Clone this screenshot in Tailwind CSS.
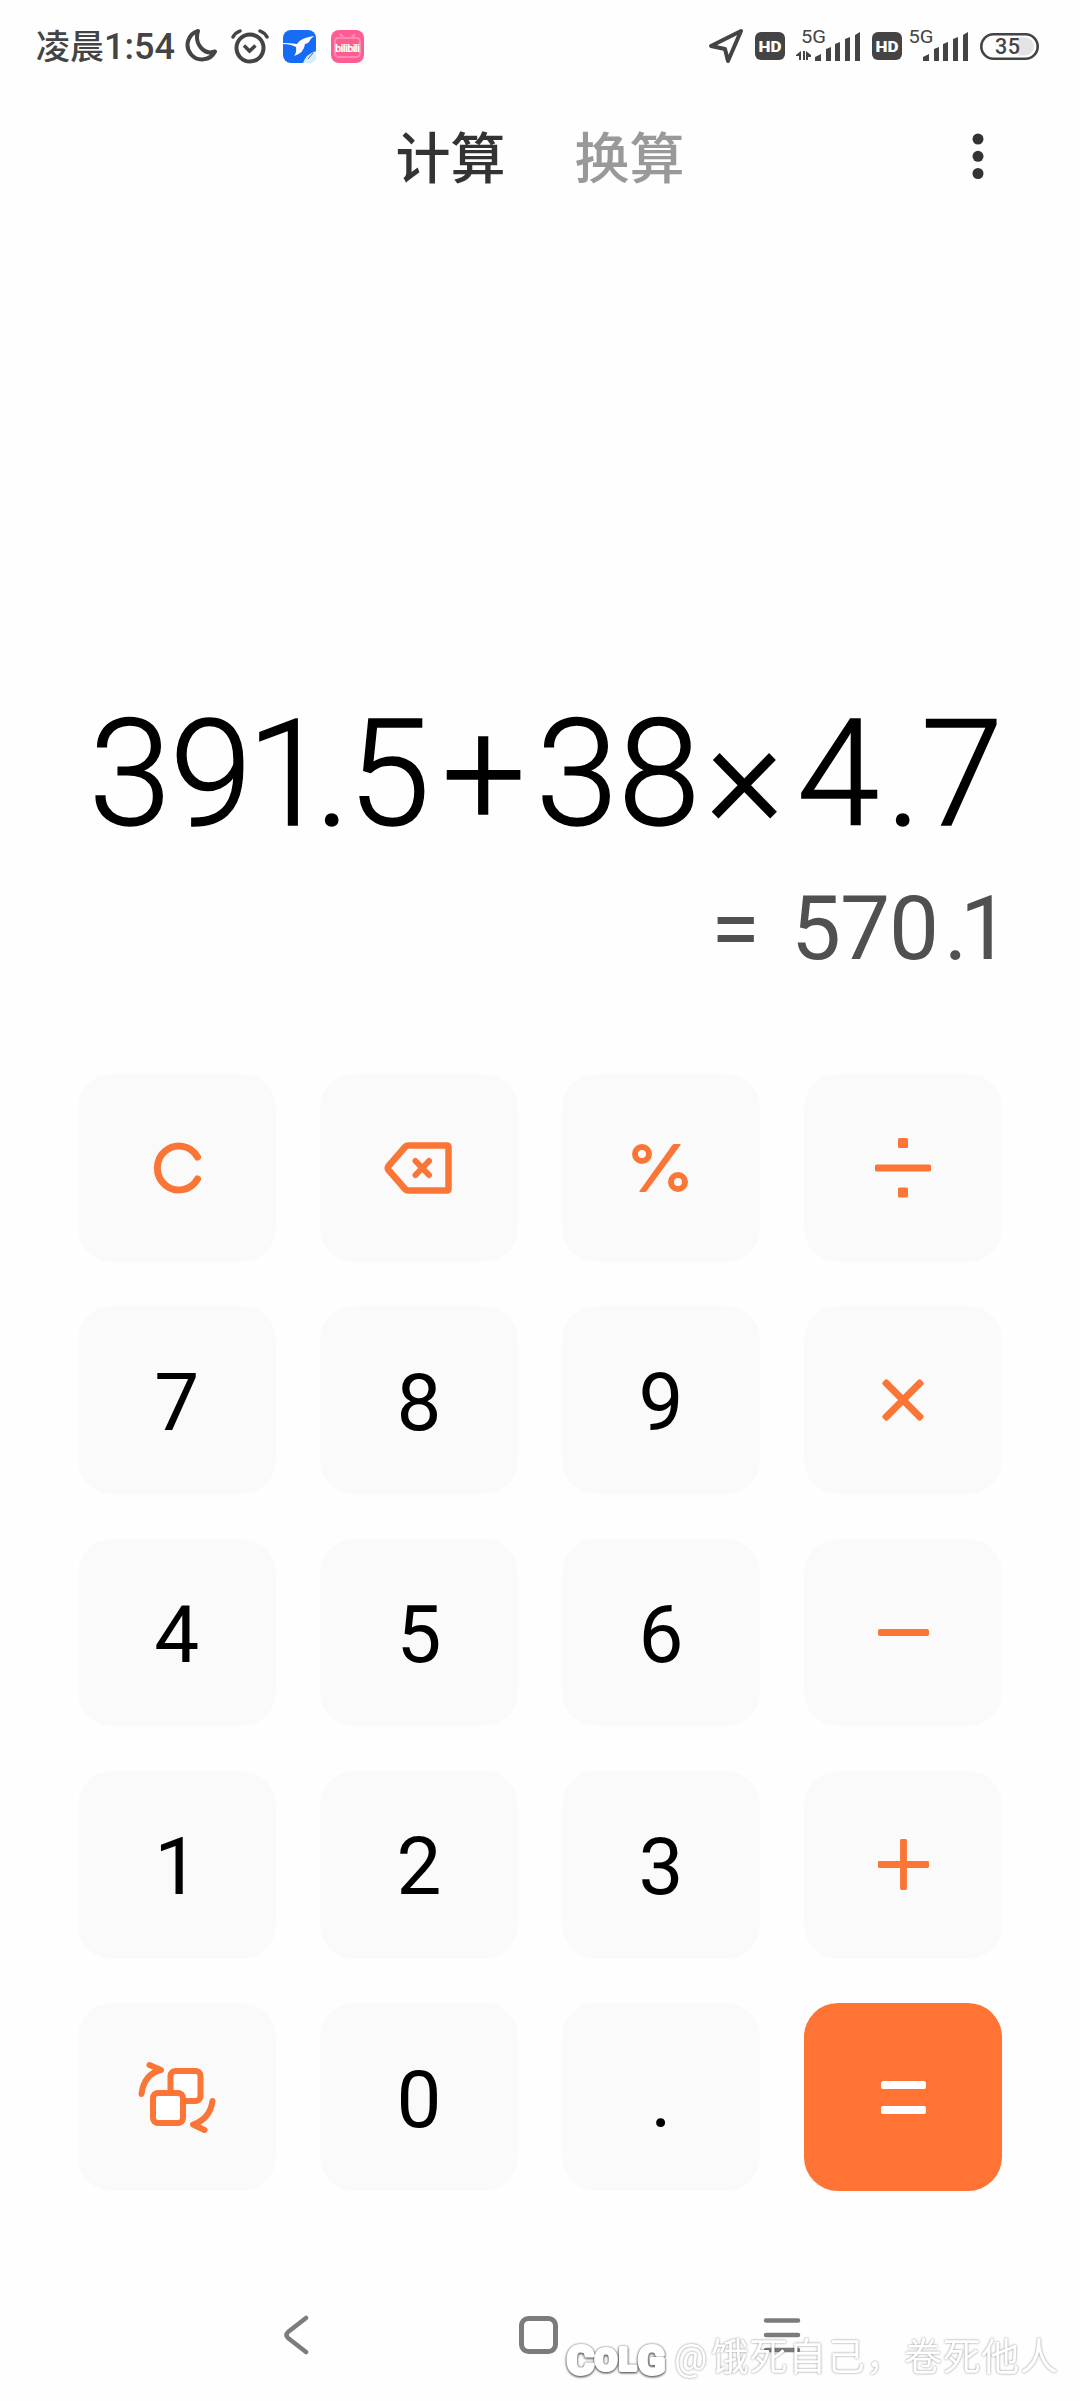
<!DOCTYPE html>
<html lang="zh-CN">
<head>
  <meta charset="UTF-8" />
  <meta name="viewport" content="width=device-width, initial-scale=1.0" />
  <title>计算器</title>
  <script src="https://cdn.jsdelivr.net/npm/@tailwindcss/browser@4"></script>
</head>
<body class="bg-[#fefefe] text-black font-['Roboto','Noto_Sans_CJK_SC',sans-serif]">
  <div class="relative w-[1080px] h-[2401px] flex flex-col overflow-hidden">

    <!-- STATUS BAR -->
    <div class="h-[92px] pl-[36px] pr-[41px] flex items-center justify-between text-[#444]">
      <div class="flex items-center">
        <span class="text-[34px] leading-[40px] font-medium font-['Noto_Sans_CJK_SC',sans-serif] whitespace-nowrap w-[148px]">凌晨<span class="font-['Roboto',sans-serif] text-[36px]">1:54</span></span>
        <svg class="w-[34px] h-[36px]" viewBox="0 0 34 36" fill="none" stroke="currentColor" stroke-width="4" stroke-linejoin="round"><path d="M14 3A14.5 14.5 0 1 0 31 23.500C20 27.500 10 16 14 3Z" /></svg>
        <svg class="w-[38px] h-[36px] ml-[13px]" viewBox="0 0 38 36" fill="none" stroke="currentColor" stroke-width="4"><circle cx="19" cy="20" r="13.500" /><path d="M13 17.500l5.500 5.500 6-5.500" stroke-width="3.500" /><path d="M2 9q2-4 7-6M36 9q-2-4-7-6" stroke-linecap="round" stroke-width="3.500" /></svg>
        <svg class="w-[33px] h-[33px] ml-[14px]" viewBox="0 0 33 33"><rect width="33" height="33" rx="8" fill="#166cf5" /><path d="M20 33Q23 24 33 21V26Q33 33 26 33Z" fill="#d8eefa" /><path d="M0 13Q8 13 14 14Q17 8 31 6Q27 9 26 12Q24 14 22 14Q21 23 11 26Q14 22 13 17Q8 14 0 14Z" fill="#fff" /><path d="M25 29l5-6" stroke="#668" stroke-width="1" /></svg>
        <svg class="w-[33px] h-[33px] ml-[15px]" viewBox="0 0 33 33"><rect width="33" height="33" rx="8" fill="#ff5c92" /><path d="M9 4l4 4M24 4l-4 4M7 8h19q3 0 3 4v11q0 4-4 4H8q-4 0-4-4V12q0-4 3-4Z" fill="none" stroke="#ff8ab2" stroke-width="2" /><text x="4" y="21.500" font-size="11" font-weight="700" textLength="25" lengthAdjust="spacing" fill="#fff">bilibili</text></svg>
      </div>
      <div class="flex items-center">
        <svg class="w-[36px] h-[36px]" viewBox="0 0 36 36" fill="none" stroke="currentColor" stroke-width="4" stroke-linejoin="round"><path d="M3 18L33 3L20 33L17 21Z" /></svg>
        <svg class="w-[30px] h-[28px] ml-[11px]" viewBox="0 0 30 28"><rect width="30" height="28" rx="6" fill="currentColor" /><text x="3.500" y="19.500" font-size="15.500" font-weight="900" textLength="23" lengthAdjust="spacingAndGlyphs" fill="#fff">HD</text></svg>
        <svg class="w-[65px] h-[40px] ml-[11px] mt-[-6px]" viewBox="0 -6 65 40" fill="currentColor"><text x="5" y="13.500" font-size="19" textLength="25" lengthAdjust="spacingAndGlyphs">5G</text><path d="M0 26l5-4v9H3v-4H0ZM7 22h2v9H7ZM10 22l5 4v2h-3v3h-2Z" /><path d="M19 32v-4l6-3v7ZM30 32V20l5-2v14ZM39 32V15l5-2v19ZM49 32V10l5-2v24ZM59 32V6l5-3v29Z" /></svg>
        <svg class="w-[30px] h-[28px] ml-[11px]" viewBox="0 0 30 28"><rect width="30" height="28" rx="6" fill="currentColor" /><text x="3.500" y="19.500" font-size="15.500" font-weight="900" textLength="23" lengthAdjust="spacingAndGlyphs" fill="#fff">HD</text></svg>
        <svg class="w-[61px] h-[40px] ml-[6px] mt-[-6px]" viewBox="0 -6 61 40" fill="currentColor"><text x="0.500" y="13.500" font-size="19" textLength="25" lengthAdjust="spacingAndGlyphs">5G</text><path d="M15 32v-4l6-3v7ZM26 32V20l5-2v14ZM35 32V15l5-2v19ZM45 32V10l5-2v24ZM55 32V6l5-3v29Z" /></svg>
        <svg class="w-[59px] h-[27px] ml-[11px]" viewBox="0 0 59 27"><path d="M38 4.500h7a9 9 0 0 1 0 18h-7Z" fill="#e4e4e4" /><rect x="1.300" y="1.300" width="56.400" height="24.400" rx="12.200" fill="none" stroke="currentColor" stroke-width="2.600" /><text x="15" y="21" font-size="21.500" font-weight="500" textLength="25" fill="currentColor">35</text></svg>
      </div>
    </div>

    <!-- TABS -->
    <div class="relative h-[132px] flex justify-center gap-[69px] text-[55px] leading-[125px] font-medium font-['Noto_Sans_CJK_SC',sans-serif]">
      <span class="text-[#333]">计算</span>
      <span class="text-[#999]">换算</span>
      <svg class="absolute left-[972px] top-[40px] w-[12px] h-[48px]" viewBox="0 0 12 48" fill="#333"><circle cx="6" cy="7" r="5.500" /><circle cx="6" cy="24.300" r="5.500" /><circle cx="6" cy="41.500" r="5.500" /></svg>
    </div>

    <!-- DISPLAY -->
    <div class="h-[850px] pt-[446px]">
      <svg class="block w-[1080px] h-[200px]" viewBox="0 0 1080 200"><text y="155" font-size="148" font-weight="300" stroke="#000" stroke-width="1.500" x="89 170 247 315 348 442 536 618 706 797 886 921">391.5+38×4.7</text></svg>
      <svg class="block w-[1080px] h-[120px]" viewBox="0 0 1080 120" fill="#505050"><text y="89" font-size="89" x="711 758 791 840 889 944 960">= 570.1</text></svg>
    </div>

    <!-- KEYPAD -->
    <div class="mx-[78px] h-[1117px] grid grid-cols-4 grid-rows-5 gap-[44.500px] text-[80px] leading-none">
      <button class="rounded-[34px] bg-[#fafafa] flex items-center justify-center"><svg class="w-[48px] h-[52px]" viewBox="0 0 48 52" fill="none" stroke="#fb7636" stroke-width="7" stroke-linecap="round"><path d="M44.500 15A21.500 22 0 1 0 44.500 37" /></svg></button>
      <button class="rounded-[34px] bg-[#fafafa] flex items-center justify-center"><svg class="w-[68px] h-[52px] mr-[2px]" viewBox="0 0 68 52" fill="none" stroke="#fb7636" stroke-width="6.500" stroke-linecap="round" stroke-linejoin="round"><path d="M24 3.500H63q1.500 0 1.500 1.500V47q0 1.500-1.500 1.500H24q-1.500 0-2.500-1L4.500 28q-1.500-2 0-4L21.500 4.500q1-1 2.500-1Z" /><path d="M31.500 19l13.500 14M45 19l-13.500 14" stroke-width="6" /></svg></button>
      <button class="rounded-[34px] bg-[#fafafa] flex items-center justify-center"><svg class="w-[56px] h-[48px] mr-[2px]" viewBox="0 0 56 48" fill="none" stroke="#fb7636" stroke-width="6"><circle cx="10" cy="10" r="7" /><circle cx="46" cy="38" r="7" /><path d="M42 0h6q1 0 .5 1L15 46.500q-1 1.500-2 1.500H8q-1 0-.5-1L40 1.500q1-1.500 2-1.500Z" fill="#fb7636" stroke="none" /></svg></button>
      <button class="rounded-[34px] bg-[#fafafa] flex items-center justify-center"><svg class="w-[58px] h-[60px]" viewBox="0 0 58 60" fill="#fb7636"><rect x="24" width="10" height="10" rx="1.500" /><rect x="1" y="26.500" width="56" height="7" rx="1.500" /><rect x="24" y="49.500" width="10" height="10" rx="1.500" /></svg></button>

      <button class="rounded-[34px] bg-[#fafafa] pt-[5px]">7</button>
      <button class="rounded-[34px] bg-[#fafafa] pt-[5px]">8</button>
      <button class="rounded-[34px] bg-[#fafafa] pt-[5px]">9</button>
      <button class="rounded-[34px] bg-[#fafafa] flex items-center justify-center"><svg class="w-[44px] h-[44px]" viewBox="0 0 44 44" fill="#fb7636"><rect x="-5" y="18.500" width="54" height="7" rx="2" transform="rotate(45 22 22)" /><rect x="-5" y="18.500" width="54" height="7" rx="2" transform="rotate(-45 22 22)" /></svg></button>

      <button class="rounded-[34px] bg-[#fafafa] pt-[5px]">4</button>
      <button class="rounded-[34px] bg-[#fafafa] pt-[5px]">5</button>
      <button class="rounded-[34px] bg-[#fafafa] pt-[5px]">6</button>
      <button class="rounded-[34px] bg-[#fafafa] flex items-center justify-center"><span class="w-[51px] h-[7px] rounded-[2px] bg-[#fb7636]"></span></button>

      <button class="rounded-[34px] bg-[#fafafa] pt-[5px]">1</button>
      <button class="rounded-[34px] bg-[#fafafa] pt-[5px]">2</button>
      <button class="rounded-[34px] bg-[#fafafa] pt-[5px]">3</button>
      <button class="rounded-[34px] bg-[#fafafa] flex items-center justify-center"><svg class="w-[51px] h-[51px]" viewBox="0 0 52 52" fill="#fb7636"><rect y="22.500" width="52" height="7" rx="1.500" /><rect x="22.500" width="7" height="52" rx="1.500" /></svg></button>

      <button class="rounded-[34px] bg-[#fafafa] flex items-center justify-center"><svg class="w-[78px] h-[72px]" viewBox="0 0 78 72" fill="none" stroke="#fb7636" stroke-width="6" stroke-linecap="round" stroke-linejoin="round"><rect x="32.500" y="10" width="30" height="30" rx="5" fill="#fff" /><rect x="15" y="32" width="30" height="30" rx="5" fill="#fff" /><path d="M3.500 33Q6 13 23 9L11.500 4M74.500 40Q72 58 55 63.500L66.500 69" /></svg></button>
      <button class="rounded-[34px] bg-[#fafafa] pt-[5px]">0</button>
      <button class="rounded-[34px] bg-[#fafafa] pt-[5px]">.</button>
      <button class="rounded-[34px] bg-[#ff7434] flex flex-col items-center justify-center gap-[17px]"><span class="w-[45px] h-[8px] rounded-[2px] bg-white"></span><span class="w-[45px] h-[8px] rounded-[2px] bg-white"></span></button>
    </div>

    <!-- NAVIGATION BAR -->
    <div class="flex-1 pt-[124px] pl-[283px] flex items-start text-[#7c7c7c]">
      <svg class="w-[26px] h-[40px]" viewBox="0 0 26 40" fill="none" stroke="currentColor" stroke-width="4.500" stroke-linecap="round" stroke-linejoin="round"><path d="M23 3L5 17q-3 3 0 6L23 37" /></svg>
      <svg class="w-[40px] h-[40px] ml-[209px]" viewBox="0 0 40 40" fill="none" stroke="currentColor" stroke-width="5"><rect x="3.500" y="3.500" width="34" height="33" rx="7" /></svg>
      <svg class="w-[38px] h-[40px] ml-[205px]" viewBox="0 0 38 40" stroke="currentColor" stroke-width="4.500" stroke-linecap="round"><path d="M3 5.500h32M3 20h32M3 35h32" /></svg>
    </div>

    <!-- WATERMARK -->
    <svg class="absolute left-[560px] top-[2326px] w-[520px] h-[75px] drop-shadow-[0_0_1px_rgba(0,0,0,0.45)]" viewBox="0 0 520 75" fill="#fff">
      <g stroke="#fff" stroke-width="4" stroke-linejoin="round" class="drop-shadow-[0_1px_1px_rgba(0,0,0,0.6)]" font-weight="700">
        <text x="7" y="48" font-size="38" textLength="27" lengthAdjust="spacingAndGlyphs">C</text>
        <text x="35" y="44" font-size="30" textLength="22" lengthAdjust="spacingAndGlyphs">O</text>
        <text x="59" y="44" font-size="31" textLength="17" lengthAdjust="spacingAndGlyphs">L</text>
        <text x="78" y="48" font-size="38" textLength="27" lengthAdjust="spacingAndGlyphs">G</text>
      </g>
      <text x="114" y="44" font-size="37" textLength="34">@</text>
      <text x="151" y="44" font-size="38" textLength="347">饿死自己，卷死他人</text>
    </svg>
  </div>
</body>
</html>
